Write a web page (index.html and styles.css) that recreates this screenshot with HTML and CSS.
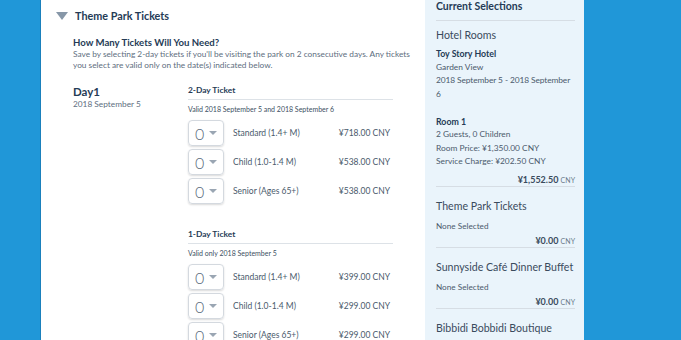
FILE: index.html
```html
<!DOCTYPE html>
<html lang="en">
<head>
    <meta charset="UTF-8">
    <title>Theme Park Tickets</title>
    <link rel="stylesheet" href="styles.css">
</head>
<body>
    <div class="page">
        <div class="main">
            <div class="section-title">
                <span class="caret"></span>
                <h2>Theme Park Tickets</h2>
            </div>

            <div class="intro">
                <h3>How Many Tickets Will You Need?</h3>
                <p>Save by selecting 2-day tickets if you'll be visiting the park on 2 consecutive days. Any tickets you select are valid only on the date(s) indicated below.</p>
            </div>

            <div class="day">
                <div class="day-label">
                    <h4>Day1</h4>
                    <p>2018 September 5</p>
                </div>
                <div class="tickets">
                    <div class="ticket-group">
                        <h5>2-Day Ticket</h5>
                        <p class="valid">Valid 2018 September 5 and 2018 September 6</p>
                        <div class="row">
                            <div class="qty"><span>0</span><i class="arrow"></i></div>
                            <span class="type">Standard (1.4+ M)</span>
                            <span class="price">¥718.00 CNY</span>
                        </div>
                        <div class="row">
                            <div class="qty"><span>0</span><i class="arrow"></i></div>
                            <span class="type">Child (1.0-1.4 M)</span>
                            <span class="price">¥538.00 CNY</span>
                        </div>
                        <div class="row">
                            <div class="qty"><span>0</span><i class="arrow"></i></div>
                            <span class="type">Senior (Ages 65+)</span>
                            <span class="price">¥538.00 CNY</span>
                        </div>
                    </div>

                    <div class="ticket-group">
                        <h5>1-Day Ticket</h5>
                        <p class="valid">Valid only 2018 September 5</p>
                        <div class="row">
                            <div class="qty"><span>0</span><i class="arrow"></i></div>
                            <span class="type">Standard (1.4+ M)</span>
                            <span class="price">¥399.00 CNY</span>
                        </div>
                        <div class="row">
                            <div class="qty"><span>0</span><i class="arrow"></i></div>
                            <span class="type">Child (1.0-1.4 M)</span>
                            <span class="price">¥299.00 CNY</span>
                        </div>
                        <div class="row">
                            <div class="qty"><span>0</span><i class="arrow"></i></div>
                            <span class="type">Senior (Ages 65+)</span>
                            <span class="price">¥299.00 CNY</span>
                        </div>
                    </div>
                </div>
            </div>
        </div>

        <div class="sidebar">
            <h2 class="side-title">Current Selections</h2>

            <div class="side-block hotel">
                <h3>Hotel Rooms</h3>
                <p class="strong">Toy Story Hotel</p>
                <p>Garden View</p>
                <p><span class="dates">2018 September 5 - 2018 September</span><br>6</p>
                <p class="strong room">Room 1</p>
                <p>2 Guests, 0 Children</p>
                <p>Room Price: ¥1,350.00 CNY</p>
                <p>Service Charge: ¥202.50 CNY</p>
                <div class="total">¥1,552.50 <small>CNY</small></div>
            </div>

            <div class="side-block">
                <h3>Theme Park Tickets</h3>
                <p class="none">None Selected</p>
                <div class="total">¥0.00 <small>CNY</small></div>
            </div>

            <div class="side-block">
                <h3>Sunnyside Café Dinner Buffet</h3>
                <p class="none">None Selected</p>
                <div class="total">¥0.00 <small>CNY</small></div>
            </div>

            <div class="side-block">
                <h3>Bibbidi Bobbidi Boutique</h3>
                <p class="none">None Selected</p>
            </div>
        </div>
    </div>
</body>
</html>
```

FILE: styles.css
```css
body {
    margin: 0;
    height: 340px;
    overflow: hidden;
    background-color: #2097d8;
    font-family: Lato, "Noto Sans", sans-serif;
    color: #253b56;
}

.page {
    display: flex;
    margin-left: 40px;
    border-left: 1px solid #1a80bc;
    width: 543px;
}

p, h2, h3, h4, h5 {
    margin: 0;
}

/* main column */
.main {
    width: 384px;
    background-color: #ffffff;
    padding: 8px 0 0 15px;
    box-sizing: border-box;
    height: 340px;
}

.section-title {
    display: flex;
    align-items: center;
    gap: 7px;
    height: 16px;
}

.caret {
    width: 0;
    height: 0;
    border-left: 6px solid transparent;
    border-right: 6px solid transparent;
    border-top: 8px solid #8797a8;
}

.section-title h2 {
    font-size: 10.8px;
    line-height: 16px;
    font-weight: 700;
}

.intro {
    margin: 11.5px 0 0 17px;
    width: 346px;
}

.intro h3 {
    font-size: 9.6px;
    line-height: 13px;
    font-weight: 700;
}

.intro p {
    font-size: 8.3px;
    line-height: 11px;
    color: #5e6e80;
}

.day {
    display: flex;
    margin: 14px 0 0 17px;
}

.day-label {
    width: 115px;
}

.day-label h4 {
    font-size: 11.5px;
    line-height: 14px;
    font-weight: 700;
}

.day-label p {
    font-size: 8.3px;
    line-height: 10px;
    color: #5e6e80;
}

.tickets {
    width: 205px;
}

.ticket-group {
    margin-bottom: 23px;
}

.ticket-group h5 {
    font-size: 8.4px;
    line-height: 11px;
    font-weight: 700;
    padding-bottom: 3px;
    border-bottom: 1px solid #dde2e7;
}

.valid {
    font-size: 7px;
    line-height: 9px;
    color: #3d4f63;
    margin: 5px 0 5px;
}

.row {
    display: flex;
    align-items: center;
    height: 29px;
    font-size: 8.5px;
    color: #4a5a6c;
}

.qty {
    display: flex;
    align-items: center;
    justify-content: space-between;
    width: 36px;
    height: 26px;
    padding: 0 6px 0 6px;
    box-sizing: border-box;
    border: 1px solid #d4d9df;
    border-radius: 4px;
    box-shadow: 0 1px 2px rgba(0, 0, 0, 0.15);
    font-size: 16px;
    font-weight: 300;
    color: #5a6b7d;
}

.arrow {
    width: 0;
    height: 0;
    border-left: 4px solid transparent;
    border-right: 4px solid transparent;
    border-top: 4px solid #9aa6b3;
}

.type {
    margin-left: 9px;
    flex: 1;
}

.price {
    margin-right: 3px;
}

/* sidebar */
.sidebar {
    width: 159px;
    background-color: #eaf4fb;
    padding: 0 9px 0 11px;
    box-sizing: border-box;
    height: 340px;
}

.side-title {
    font-size: 10.5px;
    line-height: 12px;
    font-weight: 700;
    padding-bottom: 8px;
    border-bottom: 1px solid #d6dde4;
}

.side-block {
    padding-top: 12px;
    border-bottom: 1px solid #d6dde4;
    font-size: 8.4px;
    color: #4a5a6c;
}

.side-block.hotel {
    padding-top: 7px;
}

.side-block h3 {
    font-size: 10.6px;
    line-height: 14px;
    font-weight: 400;
    color: #3a4b5d;
    margin-bottom: 5px;
    white-space: nowrap;
}

.side-block p {
    line-height: 13.5px;
}

.side-block .strong {
    font-size: 8.8px;
    font-weight: 700;
    color: #253b56;
}

.side-block .room {
    margin-top: 13.5px;
}

.dates {
    white-space: nowrap;
    letter-spacing: -0.1px;
}

.side-block .none {
    font-size: 8.2px;
    line-height: 11px;
    margin-top: 8px;
}

.total {
    text-align: right;
    font-size: 9px;
    line-height: 12px;
    font-weight: 700;
    color: #3a4b5d;
    padding: 3px 0 0;
}

.hotel .total {
    padding-top: 5px;
}

.total small {
    font-size: 7px;
    font-weight: 400;
    color: #6a7a8a;
}
```
